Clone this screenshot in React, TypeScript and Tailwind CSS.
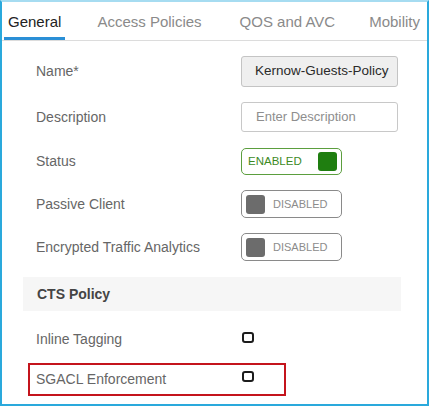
const FONT = { fontFamily: '"Liberation Sans", Arial, sans-serif' };

function Toggle({ on }: { on: boolean }) {
  if (on) {
    return (
      <div className="flex h-full w-[101px] items-center justify-between rounded-[5px] border border-[#5b9e3e] pl-[6px] pr-[4px]">
        <span className="text-[11.5px] text-[#3d8a1f]">ENABLED</span>
        <span className="h-[19px] w-[19px] rounded-[3px] bg-[#1f7e10]" />
      </div>
    );
  }
  return (
    <div className="flex h-full w-[101px] items-center gap-[8px] rounded-[5px] border border-[#8a8a8a] pl-[4px]">
      <span className="h-[19px] w-[19px] rounded-[3px] bg-[#6c6c6c]" />
      <span className="text-[11px] text-[#8c8c8c]">DISABLED</span>
    </div>
  );
}

function Check() {
  return <span className="block h-[11px] w-[12px] rounded-[3px] border-2 border-[#1c1c1c]" />;
}

function Row({ label, className, children }: { label: string; className: string; children: React.ReactNode }) {
  return (
    <div className={`flex items-center pl-[34px] ${className}`}>
      <span className="w-[205px] shrink-0 text-[14px] text-[#666]">{label}</span>
      <div className="flex h-full items-center">{children}</div>
    </div>
  );
}

export default function App() {
  const tabs = [
    { label: "General", active: true, ml: "ml-[2px]" },
    { label: "Access Policies", active: false, ml: "ml-[28px]" },
    { label: "QOS and AVC", active: false, ml: "ml-[30px]" },
    { label: "Mobility", active: false, ml: "ml-[26px]" },
  ];

  return (
    <div
      className="box-border h-[406px] w-[429px] overflow-hidden border-2 border-[#2aa9dc] border-t-[#a6dcf1] bg-white"
      style={FONT}
    >
      <div className="flex h-[39px] items-stretch border-b border-[#dcdcdc]">
        {tabs.map((t) => (
          <div
            key={t.label}
            className={`flex items-center whitespace-nowrap border-b-[3px] px-[4px] pt-[6px] text-[15px] ${t.ml} ${
              t.active ? "border-[#2a8fd6] text-[#222]" : "border-transparent text-[#8a8a8a]"
            }`}
          >
            {t.label}
          </div>
        ))}
      </div>

      <div className="flex flex-col">
        <Row label="Name*" className="mt-[15px] h-[31px]">
          <div className="flex h-full w-[157px] items-center rounded-[3px] border border-[#c4c4c4] bg-[#efefef] pl-[13px] text-[13.5px] text-[#2a2a2a]">
            Kernow-Guests-Policy
          </div>
        </Row>
        <Row label="Description" className="mt-[15px] h-[30px]">
          <div className="flex h-full w-[157px] items-center rounded-[3px] border border-[#c8c8c8] bg-white pl-[14px] text-[13px] text-[#8e8e8e]">
            Enter Description
          </div>
        </Row>
        <Row label="Status" className="mt-[16px] h-[27px]">
          <Toggle on />
        </Row>
        <Row label="Passive Client" className="mt-[15px] h-[28px]">
          <Toggle on={false} />
        </Row>
        <Row label="Encrypted Traffic Analytics" className="mt-[15px] h-[28px]">
          <Toggle on={false} />
        </Row>

        <div className="ml-[21px] mt-[16px] flex h-[34px] w-[378px] items-center bg-[#f6f6f6] pl-[14px] text-[14px] font-bold text-[#444]">
          CTS Policy
        </div>

        <Row label="Inline Tagging" className="mt-[18px] h-[20px]">
          <div className="-mt-[3px] pl-[1px]">
            <Check />
          </div>
        </Row>

        <div className="ml-[26px] mt-[14px] flex h-[33px] w-[258px] items-center border-2 border-[#c4141c] pl-[6px]">
          <span className="w-[205px] shrink-0 text-[14px] text-[#666]">SGACL Enforcement</span>
          <div className="-mt-[6px] pl-[1px]">
            <Check />
          </div>
        </div>
      </div>
    </div>
  );
}
